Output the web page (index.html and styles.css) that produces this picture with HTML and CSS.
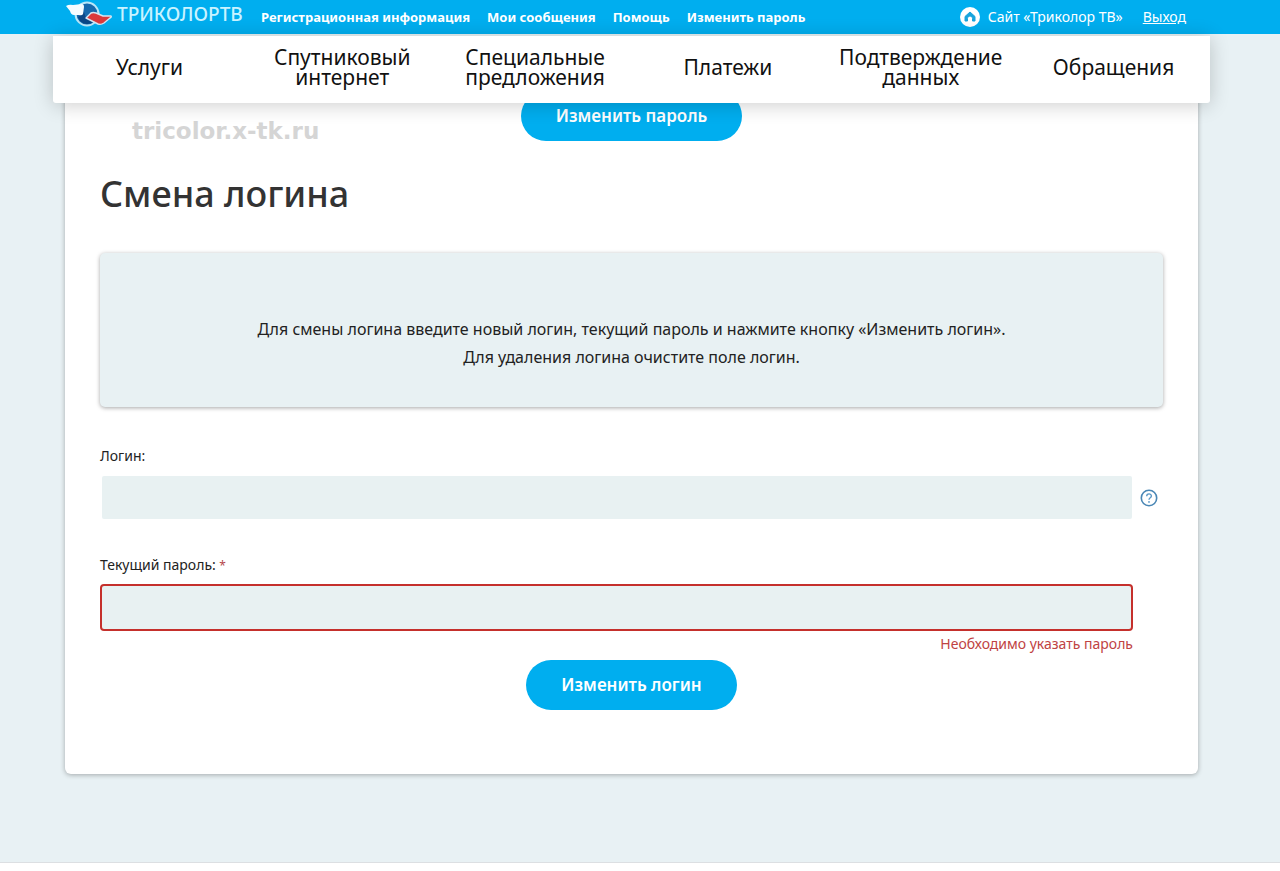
FILE: index.html
```html
<!DOCTYPE html>
<html lang="ru">
<head>
<meta charset="utf-8">
<meta name="viewport" content="width=device-width, initial-scale=1">
<title>Смена логина</title>
<link rel="stylesheet" href="styles.css">
</head>
<body>
<header class="topbar">
  <div class="topbar-inner">
    <a class="logo" href="#">
      <svg class="logo-mark" viewBox="0 0 48 28" aria-hidden="true">
        <circle cx="22" cy="14" r="11.5" fill="#1769ad" stroke="#b9e6f8" stroke-width="2"/>
        <path d="M13 17a9.500 9.500 0 0 0 15 5l-7-4-2-6z" fill="#0c4786"/>
        <path d="M1 6q3-2 7-1l9-1q2 0 2 3l-1 7q-1 2-4 1H9q-3 0-4-4z" fill="#f5fcff"/>
        <path d="M21 18l5-5q2-1 5 0l7 3h8q1 1-1 2l-6 5q-3 2-6 1l-6-3z" fill="#dc3a3c" stroke="#d5e6f2" stroke-width="1.400" stroke-linejoin="round"/>
      </svg>
      <span class="logo-text">ТРИКОЛОРТВ</span>
    </a>
    <nav class="top-links" aria-label="Личный кабинет">
      <a href="#">Регистрационная информация</a>
      <a href="#">Мои сообщения</a>
      <a href="#">Помощь</a>
      <a href="#">Изменить пароль</a>
    </nav>
    <div class="top-side">
      <a class="site-link" href="#">
        <svg class="home-icon" viewBox="0 0 20 20" aria-hidden="true">
          <circle cx="10" cy="10" r="10" fill="#fff"/>
          <path d="M5 9.500L10 5l5 4.500v4.500h-2.500v-2.500a2.500 2.500 0 0 0-5 0V14H5z" fill="#18a4dd" stroke="#18a4dd" stroke-linejoin="round"/>
        </svg>
        <span>Сайт «Триколор ТВ»</span>
      </a>
      <a class="exit" href="#">Выход</a>
    </div>
  </div>
</header>
<div class="page">
  <nav class="main-nav" aria-label="Разделы">
    <a href="#">Услуги</a>
    <a href="#">Спутниковый<br>интернет</a>
    <a href="#">Специальные<br>предложения</a>
    <a href="#">Платежи</a>
    <a href="#">Подтверждение<br>данных</a>
    <a href="#">Обращения</a>
  </nav>
  <main class="card">
    <div class="password-row">
      <span class="watermark">tricolor.x-tk.ru</span>
      <button class="button" type="button">Изменить пароль</button>
    </div>
    <h1>Смена логина</h1>
    <div class="notice">
      <p>Для смены логина введите новый логин, текущий пароль и нажмите кнопку «Изменить логин».</p>
      <p>Для удаления логина очистите поле логин.</p>
    </div>
    <form class="login-form">
      <label for="login">Логин:</label>
      <div class="field-row">
        <input class="field" id="login" type="text">
        <button class="help" type="button" aria-label="Справка">
          <svg viewBox="0 0 18 18" aria-hidden="true">
            <circle cx="9" cy="9" r="7.700" fill="none" stroke="#4a87b5" stroke-width="1.600"/>
            <path d="M6.700 7.200c0-3 4.700-3 4.700-.2 0 1.800-2.400 1.800-2.400 3.800" fill="none" stroke="#5b98c6" stroke-width="1.400"/>
            <circle cx="9" cy="12.900" r=".9" fill="#5b98c6"/>
          </svg>
        </button>
      </div>
      <label for="password">Текущий пароль: <span class="required">*</span></label>
      <div class="field-row">
        <input class="field field-error" id="password" type="password" aria-describedby="password-error">
      </div>
      <p class="error" id="password-error">Необходимо указать пароль</p>
      <button class="button" type="button">Изменить логин</button>
    </form>
  </main>
</div>
</body>
</html>
```
FILE: styles.css
```css
* {
  box-sizing: border-box;
}

body {
  margin: 0;
  background: #fff;
  color: #222;
  font-family: "Noto Sans", "Open Sans", sans-serif;
  font-size: 14px;
}

a {
  color: inherit;
  text-decoration: none;
}

p {
  margin: 0;
}

.topbar {
  background: #00aeef;
  color: #fff;
  padding: 0 17px 0 0;
}

.topbar-inner {
  display: flex;
  align-items: center;
  height: 34px;
  max-width: 1133px;
  margin: 0 auto;
  font-size: 13px;
  line-height: 18px;
  white-space: nowrap;
}

.logo {
  display: flex;
  align-items: center;
  gap: 4px;
  width: 196px;
  height: 28px;
  margin-bottom: 6px;
}

.logo-mark {
  width: 48px;
  height: 28px;
}

.logo-text {
  color: #c9f3ff;
  font-size: 19px;
  font-weight: 500;
}

.top-links {
  display: flex;
  gap: 17px;
  font-weight: 700;
}

.top-side {
  display: flex;
  align-items: center;
  gap: 20px;
  margin-left: auto;
  padding-right: 12px;
  font-size: 14px;
}

.site-link {
  display: flex;
  align-items: center;
  gap: 8px;
}

.home-icon {
  width: 20px;
  height: 20px;
}

.exit {
  text-decoration: underline;
}

.page {
  background: #e8f1f4;
  padding: 2px 70px 88px 53px;
  border-bottom: 1px solid #dcdfe2;
}

.main-nav {
  position: relative;
  z-index: 1;
  display: grid;
  grid-template-columns: repeat(6, 1fr);
  align-items: center;
  min-height: 67px;
  padding-bottom: 6px;
  background: #fff;
  border-radius: 0 0 3px 3px;
  box-shadow: 0 2px 20px rgba(0, 0, 0, 0.2);
  color: #111;
  font-size: 21px;
  line-height: 20px;
  text-align: center;
}

.card {
  margin: -32px 12px 0;
  padding: 20px 35px 64px;
  background: #fff;
  border-radius: 6px;
  box-shadow: 0 1px 5px rgba(0, 0, 0, 0.3);
}

.password-row {
  display: grid;
  grid-template-columns: 1fr auto 1fr;
  align-items: end;
}

.watermark {
  padding-left: 32px;
  color: #d5d5d5;
  font-family: "DejaVu Sans", sans-serif;
  font-size: 23px;
  font-weight: 700;
  line-height: 20px;
}

.button {
  height: 50px;
  padding: 0 35px;
  border: 0;
  border-radius: 25px;
  background: #00aeef;
  color: #fff;
  font: 600 17px/24px "Noto Sans", sans-serif;
}

h1 {
  margin: 28px 0 34px;
  color: #333;
  font-size: 36px;
  font-weight: 500;
  line-height: 50px;
}

.notice {
  padding: 62px 20px 36px;
  border-radius: 5px;
  background: #e8f1f3;
  box-shadow: 0 1px 4px rgba(0, 0, 0, 0.35);
  font-size: 16px;
  line-height: 28px;
  text-align: center;
}

.login-form {
  display: flex;
  flex-direction: column;
  align-items: stretch;
  padding-top: 39px;
}

.login-form label {
  line-height: 20px;
}

.required {
  color: #b5484a;
  font-size: 12px;
}

.field-row {
  display: flex;
  align-items: center;
  gap: 8px;
  padding: 10px 5px 36px 0;
}

.field {
  flex: 1;
  min-width: 0;
  height: 43px;
  margin-left: 2px;
  padding: 0 12px;
  border: 0;
  border-radius: 2px;
  background: #e8f1f2;
  font: inherit;
}

.field-row:has(.field-error) {
  padding: 8px 30px 3px 0;
}

.field-error {
  height: 47px;
  margin: 0;
  border: 2px solid #c5302c;
  border-radius: 4px;
}

.help {
  width: 18px;
  height: 18px;
  padding: 0;
  border: 0;
  background: none;
}

.help svg {
  display: block;
}

.error {
  padding-right: 30px;
  color: #c04343;
  line-height: 20px;
  text-align: right;
}

.login-form .button {
  align-self: center;
  margin-top: 6px;
}
```
